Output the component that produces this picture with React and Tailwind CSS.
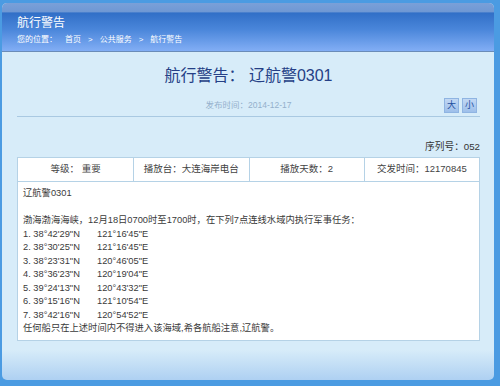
export default function App() {
  const coords = [
    ["1. 38°42'29\"N", "121°16'45\"E"],
    ["2. 38°30'25\"N", "121°16'45\"E"],
    ["3. 38°23'31\"N", "120°46'05\"E"],
    ["4. 38°36'23\"N", "120°19'04\"E"],
    ["5. 39°24'13\"N", "120°43'32\"E"],
    ["6. 39°15'16\"N", "121°10'54\"E"],
    ["7. 38°42'16\"N", "120°54'52\"E"],
  ];
  const font = { fontFamily: '"Liberation Sans", "Noto Sans CJK SC", sans-serif' };
  return (
    <div
      className="w-[500px] h-[386px] bg-[#4b9be2] pt-[3px] pl-[2px] pr-[6px] pb-[6px] overflow-hidden"
      style={font}
    >
      <div className="h-full flex flex-col rounded-[5px] overflow-hidden bg-[linear-gradient(to_bottom,#d7ecf9_0%,#d7ecf9_92%,#aed0f2_100%)]">
        <div className="h-[49px] shrink-0 border-b border-[#6a8cb8] bg-[linear-gradient(to_bottom,#7aa0d8_0%,#6f98d4_18%,#316fc7_21%,#4a86da_55%,#82aef5_100%)] pl-[15px] pt-[12px] text-white">
          <div className="text-[12px] leading-[16px]">航行警告</div>
          <div className="mt-[3px] flex gap-[7px] text-[8px] leading-[12px]">
            <span className="mr-[1px]">您的位置：</span>
            <span>首页</span>
            <span>&gt;</span>
            <span>公共服务</span>
            <span>&gt;</span>
            <span>航行警告</span>
          </div>
        </div>

        <div className="ml-[15px] mr-[14px] flex flex-col">
          <div className="mt-[13px] text-center text-[16px] leading-[22px] text-[#253f86]">
            航行警告： 辽航警0301
          </div>
          <div className="mt-[11px] grid grid-cols-[1fr_auto_1fr] items-center border-b border-[#a9c9e2] pb-[3px]">
            <div />
            <div className="text-[8.5px] leading-[15px] text-[#94b0cc]">发布时间：2014-12-17</div>
            <div className="flex justify-end gap-[3px] pr-[3px]">
              <span className="w-[15px] h-[15px] flex items-center justify-center bg-[linear-gradient(to_bottom,#c2d8f4,#9dbfea)] border border-[#8fb4e2] text-[9px] text-[#1f4f9f] leading-none">大</span>
              <span className="w-[15px] h-[15px] flex items-center justify-center bg-[linear-gradient(to_bottom,#c2d8f4,#9dbfea)] border border-[#8fb4e2] text-[9px] text-[#1f4f9f] leading-none">小</span>
            </div>
          </div>
          <div className="mt-[23px] text-right text-[9.7px] leading-[14px] text-[#333]">序列号：052</div>

          <div className="mt-[3px] border border-[#b5d2e6] bg-white text-[#333]">
            <div className="grid grid-cols-4 h-[24px] border-b border-[#b5d2e6] text-[9.5px] text-[#444]">
              <div className="flex items-center justify-center">等级： 重要</div>
              <div className="flex items-center justify-center border-l border-[#b5d2e6]">播放台：大连海岸电台</div>
              <div className="flex items-center justify-center border-l border-[#b5d2e6]">播放天数：2</div>
              <div className="flex items-center justify-center border-l border-[#b5d2e6]">交发时间：12170845</div>
            </div>
            <div className="pl-[5px] pt-[5px] pb-[4px] text-[9.3px] leading-[13.5px] text-[#3a3a3a]">
              <div>辽航警0301</div>
              <div>&nbsp;</div>
              <div>渤海渤海海峡，12月18日0700时至1700时，在下列7点连线水域内执行军事任务：</div>
              {coords.map(([a, b]) => (
                <div key={a}>
                  <span className="inline-block w-[74px]">{a}</span>
                  {b}
                </div>
              ))}
              <div>任何船只在上述时间内不得进入该海域,希各航船注意,辽航警。</div>
            </div>
          </div>
        </div>
      </div>
    </div>
  );
}
